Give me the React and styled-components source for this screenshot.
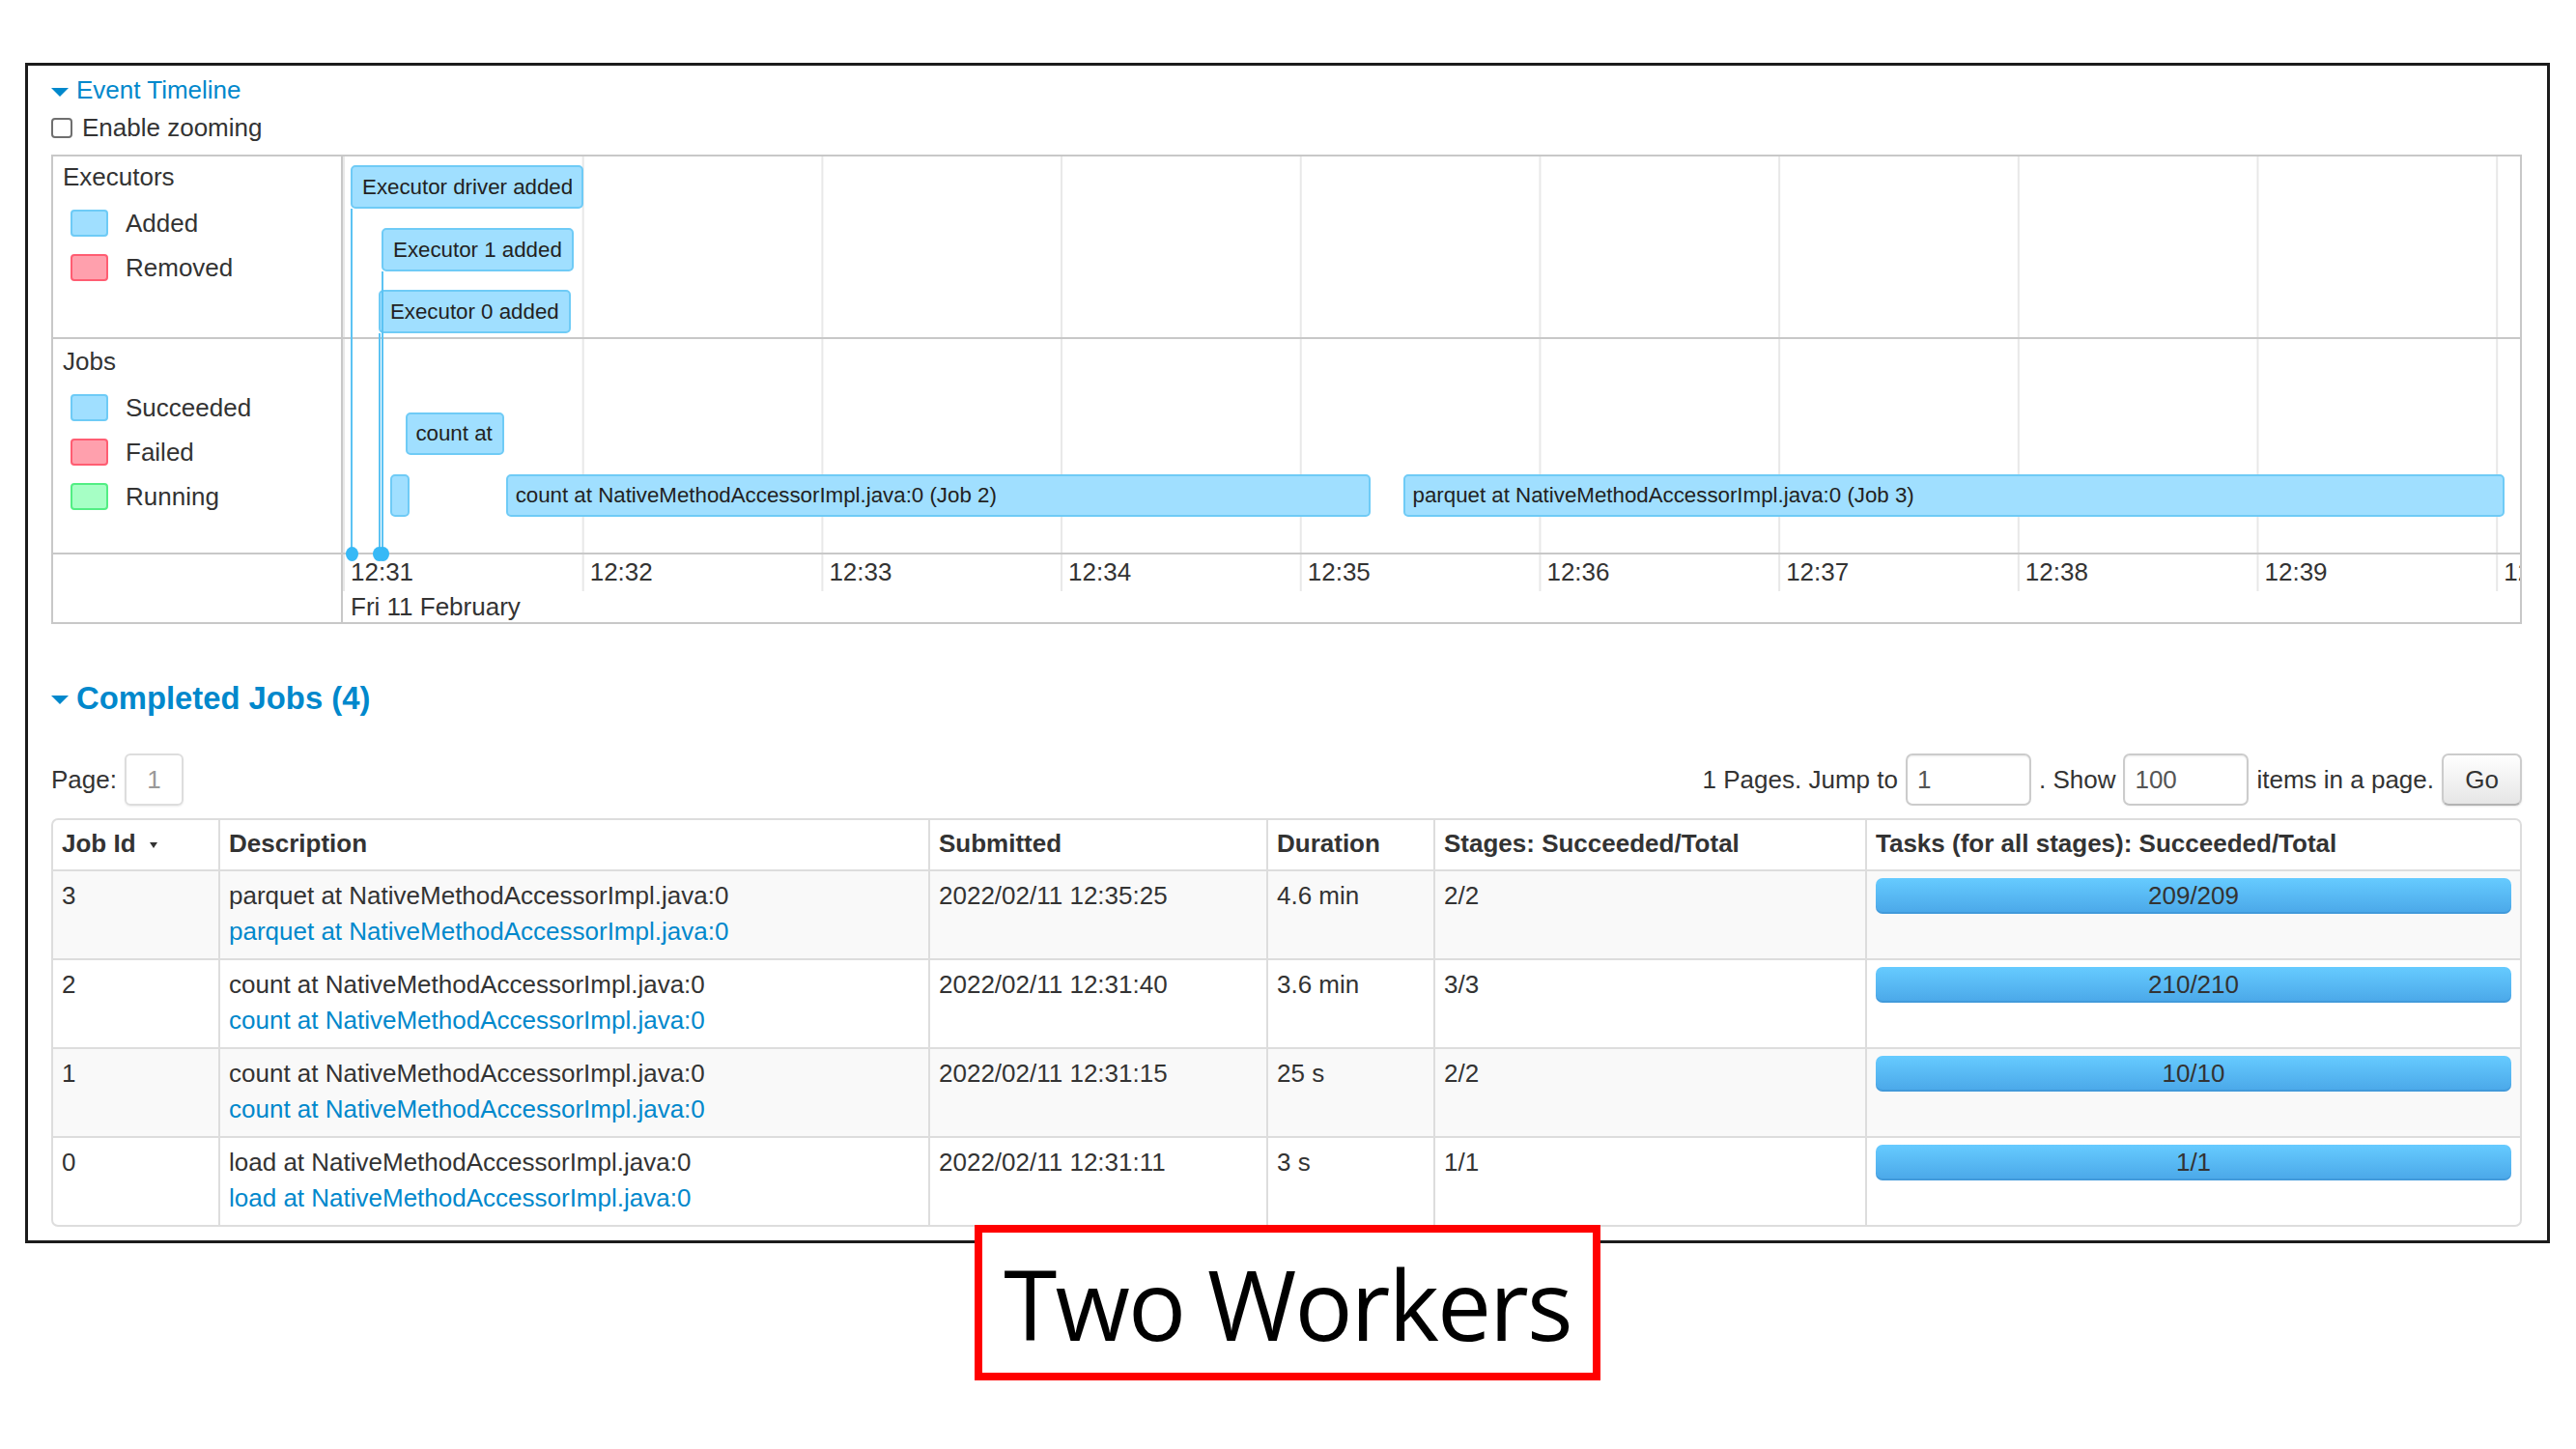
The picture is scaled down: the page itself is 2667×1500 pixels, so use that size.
import styled, { createGlobalStyle } from 'styled-components';

const MINUTE = 247.7; // px per minute on the timeline axis
const SEC = MINUTE / 60;
const OFFSET = 3.5;

const GlobalStyle = createGlobalStyle`
  html, body {
    margin: 0;
    padding: 0;
    background: #fff;
  }
  body {
    font-family: "Liberation Sans", Arial, Helvetica, sans-serif;
    color: #333;
  }
`;

const Page = styled.div`
  width: 2667px;
  height: 1500px;
  box-sizing: border-box;
  padding: 65px 27px 0 26px;
  display: flex;
  flex-direction: column;
`;

const Frame = styled.div`
  align-self: stretch;
  border: 3px solid #1c1c1c;
  padding: 7px 26px 14px 24px;
  font-size: 26px;
  line-height: 37px;
`;

const Toggle = styled.div`
  display: flex;
  align-items: center;
  gap: 8px;
  color: #0088cc;
  font-size: ${(p) => (p.$big ? '32.8px' : '26px')};
  font-weight: ${(p) => (p.$big ? 700 : 400)};
  line-height: ${(p) => (p.$big ? '36px' : '37px')};
  margin-top: ${(p) => (p.$big ? '59px' : '0')};
`;

const Caret = styled.span`
  display: inline-block;
  width: 0;
  height: 0;
  border-left: 9.5px solid transparent;
  border-right: 9.5px solid transparent;
  border-top: 9px solid #0088cc;
  margin-top: 3px;
`;

const ZoomRow = styled.label`
  display: flex;
  align-items: center;
  gap: 10px;
  height: 37px;
  margin-top: 2px;
`;

const Check = styled.input`
  appearance: none;
  width: 22px;
  height: 21px;
  margin: 0;
  border: 2px solid #6f6f6f;
  border-radius: 4px;
  background: #fff;
`;

const Timeline = styled.div`
  margin-top: 9px;
  border: 2px solid #c8c8c8;
  display: grid;
  grid-template-columns: 300px 1fr;
`;

const LegendCol = styled.div`
  display: flex;
  flex-direction: column;
  border-right: 2px solid #c8c8c8;
`;

const LegendGroup = styled.div`
  height: ${(p) => p.$h}px;
  box-sizing: border-box;
  padding-top: ${(p) => p.$pad || 0}px;
  border-bottom: ${(p) => (p.$last ? 'none' : '2px solid #c8c8c8')};
  display: flex;
  flex-direction: column;
`;

const LegendTitle = styled.div`
  padding-left: 10px;
  line-height: 37px;
  margin-bottom: 6px;
`;

const LegendItem = styled.div`
  display: flex;
  align-items: center;
  gap: 18px;
  height: 46px;
  padding-left: 18px;
`;

const SWATCH = {
  blue: ['#a0dfff', '#6ecbf6'],
  red: ['#ffa0ad', '#ff5d72'],
  green: ['#a6ffc5', '#52ee83'],
};

const Swatch = styled.span`
  width: 39px;
  height: 28px;
  box-sizing: border-box;
  border-radius: 4px;
  background: ${(p) => SWATCH[p.$c][0]};
  border: 2px solid ${(p) => SWATCH[p.$c][1]};
`;

const Canvas = styled.div`
  position: relative;
  overflow: hidden;
  display: flex;
  flex-direction: column;
`;

const Band = styled.div`
  position: relative;
  height: ${(p) => p.$h}px;
  box-sizing: border-box;
  border-bottom: ${(p) => (p.$axis ? 'none' : '2px solid #c8c8c8')};
  background-image: linear-gradient(to right, #e8e8e8 2px, transparent 2px);
  background-size: ${MINUTE}px ${(p) => (p.$axis ? '38px' : '100%')};
  background-repeat: repeat-x;
`;

const Item = styled.div`
  position: absolute;
  box-sizing: border-box;
  background: #a0dfff;
  border: 2px solid #6fcbf6;
  border-radius: 5px;
  padding: 0 ${(p) => (p.$tight ? '8px' : '10px')};
  font-size: 22.3px;
  line-height: ${(p) => p.$lh}px;
  color: #222;
  overflow: hidden;
  white-space: nowrap;
`;

const Stem = styled.div`
  position: absolute;
  width: 2px;
  background: #5cc3f3;
`;

const Dot = styled.div`
  position: absolute;
  width: 13px;
  height: 15px;
  border-radius: 50%;
  background: #37b9f6;
`;

const Ticks = styled.div`
  display: flex;
`;

const Tick = styled.div`
  flex: 0 0 ${MINUTE}px;
  box-sizing: border-box;
  padding-left: 8px;
  line-height: 36px;
`;

const DateLabel = styled.div`
  padding-left: 8px;
  margin-top: 3px;
  line-height: 31px;
`;

const Controls = styled.div`
  margin-top: 39px;
  height: 54px;
  display: flex;
  align-items: center;
  justify-content: space-between;
`;

const Group = styled.div`
  display: flex;
  align-items: center;
  gap: 8px;
`;

const PageBox = styled.span`
  width: 61px;
  height: 54px;
  box-sizing: border-box;
  border: 2px solid #ddd;
  border-radius: 6px;
  display: flex;
  align-items: center;
  justify-content: center;
  color: #999;
  box-shadow: 0 1px 2px rgba(0, 0, 0, 0.08);
`;

const Field = styled.input`
  width: 130px;
  height: 54px;
  box-sizing: border-box;
  border: 2px solid #ccc;
  border-radius: 7px;
  padding: 0 10px;
  font: inherit;
  color: #555;
  box-shadow: inset 0 1px 2px rgba(0, 0, 0, 0.08);
`;

const Go = styled.button`
  width: 83px;
  height: 54px;
  box-sizing: border-box;
  border: 2px solid #ccc;
  border-bottom-color: #b3b3b3;
  border-radius: 7px;
  background: linear-gradient(#ffffff, #e6e6e6);
  font: inherit;
  color: #333;
  box-shadow: 0 1px 2px rgba(0, 0, 0, 0.1);
`;

const TableWrap = styled.div`
  margin-top: 13px;
  border: 2px solid #ddd;
  border-radius: 7px;
  overflow: hidden;
`;

const Table = styled.table`
  width: 100%;
  border-collapse: separate;
  border-spacing: 0;
  table-layout: fixed;

  th, td {
    text-align: left;
    padding: 7px 9px 9px;
    line-height: 37px;
    vertical-align: top;
  }
  th {
    padding-top: 6px;
    padding-bottom: 8px;
    font-weight: 700;
  }
  td {
    border-top: 2px solid #ddd;
  }
  th + th, td + td {
    border-left: 2px solid #ddd;
  }
  tbody tr:nth-child(odd) td {
    background: #f9f9f9;
  }
`;

const SortArrow = styled.span`
  display: inline-block;
  width: 0;
  height: 0;
  margin-left: 14px;
  vertical-align: middle;
  border-left: 4.5px solid transparent;
  border-right: 4.5px solid transparent;
  border-top: 6px solid #333;
`;

const Link = styled.a`
  display: block;
  color: #0088cc;
  text-decoration: none;
`;

const Progress = styled.div`
  height: 37px;
  border-radius: 7px;
  background: linear-gradient(to bottom, #66cbff, #4aa7e8);
  box-shadow: inset 0 -2px 0 rgba(0, 60, 120, 0.12);
  text-align: center;
  line-height: 37px;
  color: #333;
`;

const Caption = styled.div`
  align-self: center;
  position: relative;
  z-index: 1;
  margin-top: -19px;
  width: 648px;
  height: 161px;
  box-sizing: border-box;
  border: 8px solid #ff0000;
  background: #fff;
  display: flex;
  align-items: center;
  justify-content: center;
  font-family: "Open Sans", "Noto Sans", sans-serif;
  font-size: 100px;
  letter-spacing: -2px;
  color: #000;
`;

const executors = [
  { label: 'Executor driver added', at: 1.1, top: 9, w: 241 },
  { label: 'Executor 1 added', at: 8.85, top: 74, w: 199 },
  { label: 'Executor 0 added', at: 8.1, top: 138, w: 199 },
];

// label is what fits inside the bar; very short bars show no text
const jobBars = [
  { label: '', at: 11, dur: 2.2, top: 140 },
  { label: 'count at', at: 15, dur: 24.5, top: 76 },
  { label: 'count at NativeMethodAccessorImpl.java:0 (Job 2)', at: 40, dur: 217, top: 140 },
  { label: 'parquet at NativeMethodAccessorImpl.java:0 (Job 3)', at: 265, dur: 276.2, top: 140 },
];

const ticks = ['12:31', '12:32', '12:33', '12:34', '12:35', '12:36', '12:37', '12:38', '12:39', '12:40'];

const jobs = [
  { id: 3, desc: 'parquet at NativeMethodAccessorImpl.java:0', submitted: '2022/02/11 12:35:25', duration: '4.6 min', stages: '2/2', tasks: '209/209' },
  { id: 2, desc: 'count at NativeMethodAccessorImpl.java:0', submitted: '2022/02/11 12:31:40', duration: '3.6 min', stages: '3/3', tasks: '210/210' },
  { id: 1, desc: 'count at NativeMethodAccessorImpl.java:0', submitted: '2022/02/11 12:31:15', duration: '25 s', stages: '2/2', tasks: '10/10' },
  { id: 0, desc: 'load at NativeMethodAccessorImpl.java:0', submitted: '2022/02/11 12:31:11', duration: '3 s', stages: '1/1', tasks: '1/1' },
];

const AXIS_Y = 411; // axis line, measured from the top of the canvas
const x = (s) => s * SEC + OFFSET;

const EventTimeline = () => (
  <Timeline>
    <LegendCol>
      <LegendGroup $h={189} $pad={3}>
        <LegendTitle>Executors</LegendTitle>
        <LegendItem><Swatch $c="blue" />Added</LegendItem>
        <LegendItem><Swatch $c="red" />Removed</LegendItem>
      </LegendGroup>
      <LegendGroup $h={223} $pad={5}>
        <LegendTitle>Jobs</LegendTitle>
        <LegendItem><Swatch $c="blue" />Succeeded</LegendItem>
        <LegendItem><Swatch $c="red" />Failed</LegendItem>
        <LegendItem><Swatch $c="green" />Running</LegendItem>
      </LegendGroup>
      <LegendGroup $h={70} $last />
    </LegendCol>

    <Canvas>
      <Band $h={189}>
        {executors.map((e) => (
          <Item key={e.label} $lh={41} style={{ left: x(e.at), top: e.top, width: e.w, height: 45 }}>
            {e.label}
          </Item>
        ))}
      </Band>
      <Band $h={223}>
        {jobBars.map((j) => (
          <Item
            key={j.at}
            $tight
            $lh={40}
            style={{ left: x(j.at), top: j.top, width: j.dur * SEC, height: 44 }}
          >
            {j.label}
          </Item>
        ))}
      </Band>
      <Band $h={70} $axis>
        <Ticks>
          {ticks.map((t) => (
            <Tick key={t}>{t}</Tick>
          ))}
        </Ticks>
        <DateLabel>Fri 11 February</DateLabel>
      </Band>

      {executors.map((e) => (
        <Stem key={e.label} style={{ left: x(e.at), top: e.top + 45, height: AXIS_Y - e.top - 45 }} />
      ))}
      {executors.map((e) => (
        <Dot key={e.label} style={{ left: x(e.at) - 5.5, top: AXIS_Y - 7.5 }} />
      ))}
    </Canvas>
  </Timeline>
);

const CompletedJobs = () => (
  <>
    <Toggle $big>
      <Caret />
      Completed Jobs (4)
    </Toggle>
    <Controls>
      <Group>
        Page:
        <PageBox>1</PageBox>
      </Group>
      <Group>
        1 Pages. Jump to
        <Field defaultValue="1" />
        . Show
        <Field defaultValue="100" />
        items in a page.
        <Go>Go</Go>
      </Group>
    </Controls>
    <TableWrap>
      <Table>
        <colgroup>
          <col style={{ width: 171 }} />
          <col style={{ width: 735 }} />
          <col style={{ width: 350 }} />
          <col style={{ width: 173 }} />
          <col style={{ width: 447 }} />
          <col style={{ width: 678 }} />
        </colgroup>
        <thead>
          <tr>
            <th>
              Job Id<SortArrow />
            </th>
            <th>Description</th>
            <th>Submitted</th>
            <th>Duration</th>
            <th>Stages: Succeeded/Total</th>
            <th>Tasks (for all stages): Succeeded/Total</th>
          </tr>
        </thead>
        <tbody>
          {jobs.map((j) => (
            <tr key={j.id}>
              <td>{j.id}</td>
              <td>
                {j.desc}
                <Link href="#">{j.desc}</Link>
              </td>
              <td>{j.submitted}</td>
              <td>{j.duration}</td>
              <td>{j.stages}</td>
              <td>
                <Progress>{j.tasks}</Progress>
              </td>
            </tr>
          ))}
        </tbody>
      </Table>
    </TableWrap>
  </>
);

export default function App() {
  return (
    <>
      <GlobalStyle />
      <Page>
        <Frame>
          <Toggle>
            <Caret />
            Event Timeline
          </Toggle>
          <ZoomRow>
            <Check type="checkbox" />
            Enable zooming
          </ZoomRow>
          <EventTimeline />
          <CompletedJobs />
        </Frame>
        <Caption>Two Workers</Caption>
      </Page>
    </>
  );
}
